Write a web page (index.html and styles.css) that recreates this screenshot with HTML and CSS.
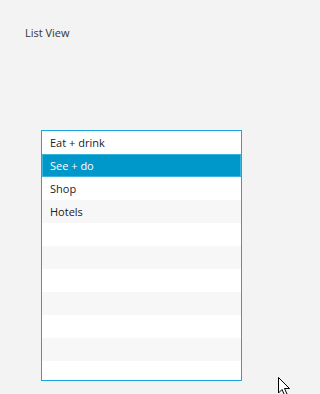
FILE: index.html
```html
<!DOCTYPE html>
<html>
<head>
<meta charset="utf-8">
<link rel="stylesheet" href="styles.css">
</head>
<body>
<div class="page">
  <div class="title">List View</div>
  <div class="listbox">
    <div class="row">Eat + drink</div>
    <div class="row selected">See + do</div>
    <div class="row">Shop</div>
    <div class="row alt">Hotels</div>
    <div class="row"></div>
    <div class="row alt"></div>
    <div class="row"></div>
    <div class="row alt"></div>
    <div class="row"></div>
    <div class="row alt"></div>
    <div class="row"></div>
  </div>
</div>
<svg class="cursor" width="14" height="20" viewBox="0 0 14 20">
  <path d="M1.5 1.5 L1.5 17 L5 13.5 L7.5 19 L10 18 L7.5 12.5 L12.5 12.5 Z" fill="#fff" stroke="#000" stroke-width="1"/>
</svg>
</body>
</html>
```
FILE: styles.css
```css
html, body {
  margin: 0;
  padding: 0;
  background: #f3f3f3;
  height: 100%;
  overflow: hidden;
}
.page {
  font-family: "Open Sans", "Noto Sans", sans-serif;
  font-size: 11px;
  color: #333;
  padding-top: 25px;
}
.title {
  padding-left: 25px;
  line-height: 16px;
  height: 16px;
}
.listbox {
  margin-top: 89px;
  margin-left: 41px;
  width: 199px;
  height: 249px;
  border: 1px solid #1aa6dd;
  background: #fff;
  overflow: hidden;
}
.row {
  height: 23px;
  line-height: 23px;
  padding-left: 8px;
  color: #222;
  box-sizing: border-box;
}
.row.alt {
  background: #f7f7f7;
}
.row.selected {
  background: #0097cb;
  color: #fff;
  border: 1px solid #3cb3dd;
  padding-left: 7px;
  line-height: 21px;
}
.cursor {
  position: absolute;
  left: 277px;
  top: 376px;
}
```
